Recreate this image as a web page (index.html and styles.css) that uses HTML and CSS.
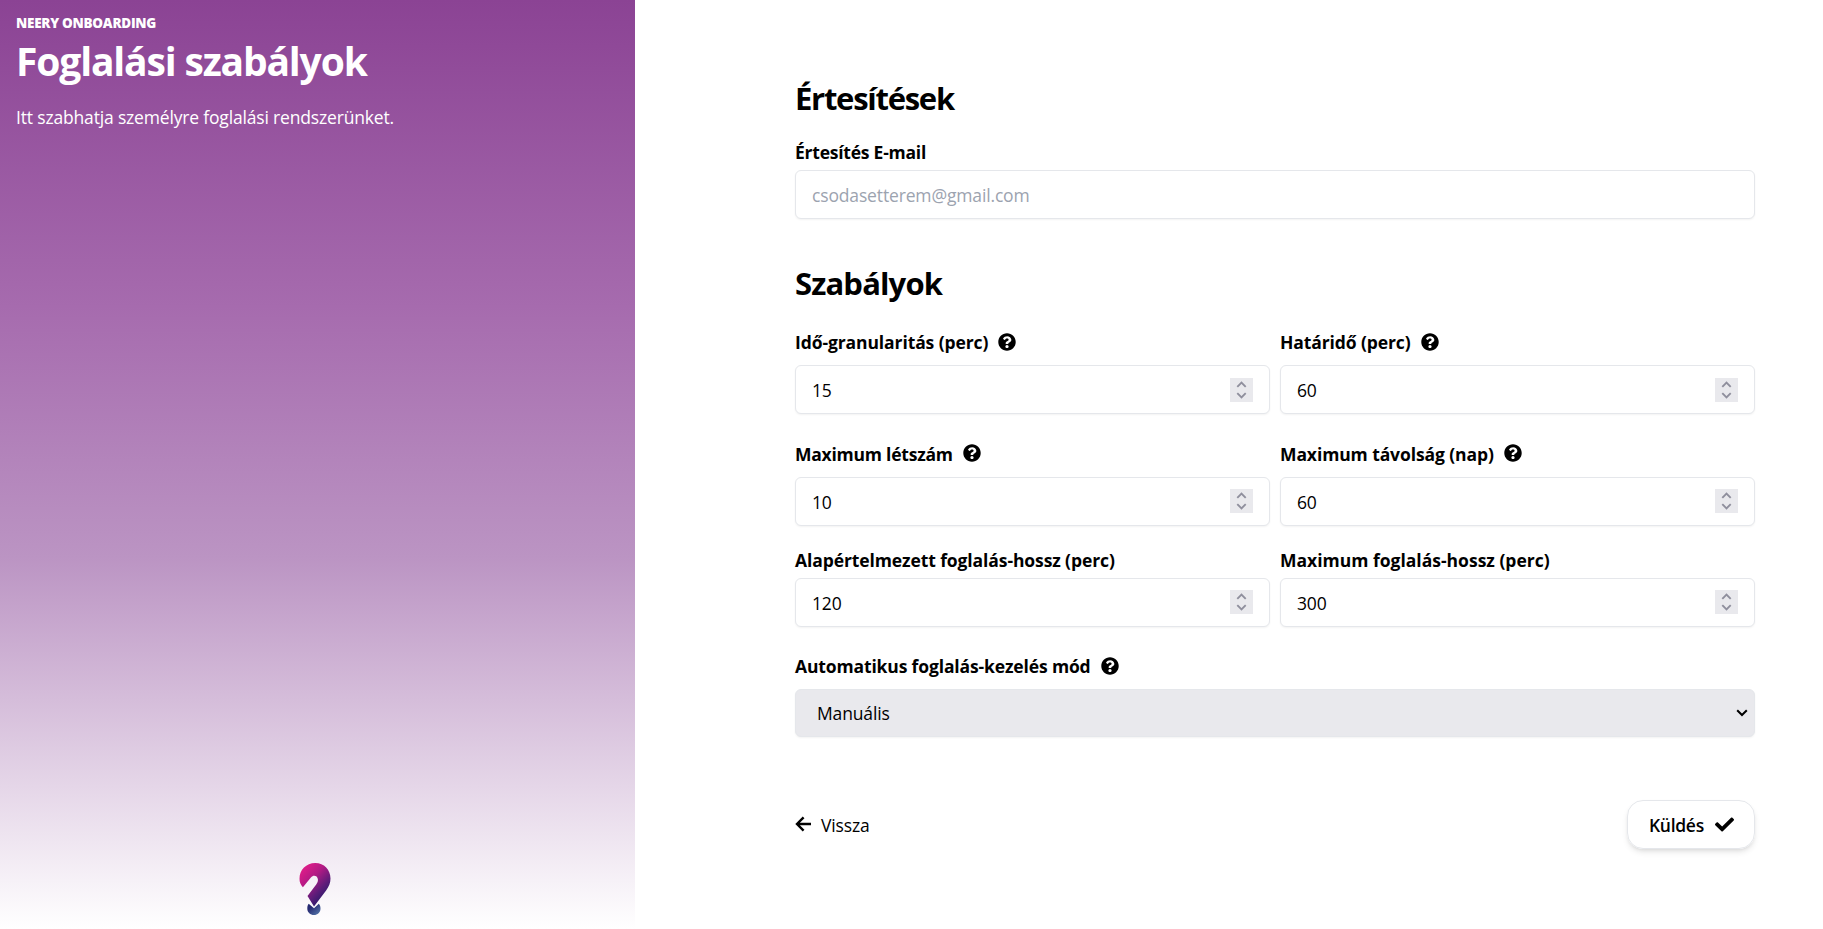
FILE: index.html
```html
<!DOCTYPE html>
<html lang="hu">
<head>
<meta charset="utf-8">
<title>Foglalási szabályok</title>
<link rel="stylesheet" href="styles.css">
</head>
<body>
<svg class="defs" width="0" height="0" aria-hidden="true">
  <symbol id="help" viewBox="0 0 512 512"><path d="M504 256c0 136.997-111.043 248-248 248S8 392.997 8 256C8 119.083 119.043 8 256 8s248 111.083 248 248zM262.655 90c-54.497 0-89.255 22.957-116.549 63.758-3.536 5.286-2.353 12.415 2.715 16.258l34.699 26.31c5.205 3.947 12.621 3.008 16.665-2.122 17.864-22.658 30.113-35.797 57.303-35.797 20.429 0 45.698 13.148 45.698 32.958 0 14.976-12.363 22.667-32.534 33.976C247.128 238.528 216 254.941 216 296v4c0 6.627 5.373 12 12 12h56c6.627 0 12-5.373 12-12v-1.333c0-28.462 83.186-29.647 83.186-106.667 0-58.002-60.165-102-116.531-102zM256 338c-25.365 0-46 20.635-46 46 0 25.364 20.635 46 46 46s46-20.636 46-46c0-25.365-20.635-46-46-46z"/></symbol>
  <symbol id="spin" viewBox="0 0 23 24"><path d="M7.300 8.900l4.200-4.200 4.200 4.200M7.300 15.200l4.200 4.200 4.200-4.200" fill="none" stroke="#8f8f9d" stroke-width="1.900"/></symbol>
</svg>
<div class="page">
  <aside class="side">
    <header>
      <p class="eyebrow">NEERY ONBOARDING</p>
      <h1 class="title">Foglalási szabályok</h1>
      <p class="lead">Itt szabhatja személyre foglalási rendszerünket.</p>
    </header>
    <svg class="logo" viewBox="0 0 32 52" width="32" height="52">
      <defs>
        <linearGradient id="lg1" gradientUnits="userSpaceOnUse" x1="3" y1="8" x2="28" y2="32"><stop offset="0" stop-color="#da1c88"/><stop offset=".35" stop-color="#b21a84"/><stop offset=".75" stop-color="#5c1c79"/><stop offset="1" stop-color="#2f1b6c"/></linearGradient>
        <linearGradient id="lg2" x1="0" y1="0" x2="1" y2="1"><stop offset=".3" stop-color="#262a72"/><stop offset="1" stop-color="#5a7fb0"/></linearGradient>
      </defs>
      <path fill="url(#lg1)" d="M3.900 24.300C1.500 21.800.5 19.200.5 15.800.5 6.800 7.200 0 16.200 0s15.300 6.800 15.300 15.500c0 4.500-1.600 8-4.400 12L15 43.500 8.500 33l8.700-11.600c1.700-2.500 2.200-4.200 1.400-6.200-1.200-2.900-4.500-3.100-6.700-.8z"/>
      <path fill="url(#lg2)" d="M9.700 40.700l5.300 4.600 4.800-4.600c1.100 1.200 1.700 2.800 1.700 4.700 0 3.900-2.900 6.600-6.500 6.600s-6.700-2.700-6.700-6.600c0-1.900.4-3.500 1.400-4.700z"/>
    </svg>
  </aside>
  <main class="form">
    <h2 class="heading h-first">Értesítések</h2>
    <div class="field tight">
      <label class="label snug">Értesítés E-mail</label>
      <div class="input placeholder">csodasetterem@gmail.com</div>
    </div>
    <h2 class="heading h-second">Szabályok</h2>
    <div class="row">
      <div class="field"><label class="label"><span>Idő-granularitás (perc)</span><svg class="help"><use href="#help"/></svg></label>
        <div class="input"><span>15</span><svg class="spin"><use href="#spin"/></svg></div></div>
      <div class="field"><label class="label"><span>Határidő (perc)</span><svg class="help"><use href="#help"/></svg></label>
        <div class="input"><span>60</span><svg class="spin"><use href="#spin"/></svg></div></div>
    </div>
    <div class="row row-2">
      <div class="field"><label class="label snug raised"><span>Maximum létszám</span><svg class="help"><use href="#help"/></svg></label>
        <div class="input raised"><span>10</span><svg class="spin"><use href="#spin"/></svg></div></div>
      <div class="field"><label class="label raised"><span>Maximum távolság (nap)</span><svg class="help"><use href="#help"/></svg></label>
        <div class="input raised"><span>60</span><svg class="spin"><use href="#spin"/></svg></div></div>
    </div>
    <div class="row row-3">
      <div class="field tight"><label class="label">Alapértelmezett foglalás-hossz (perc)</label>
        <div class="input raised"><span>120</span><svg class="spin"><use href="#spin"/></svg></div></div>
      <div class="field tight"><label class="label wide">Maximum foglalás-hossz (perc)</label>
        <div class="input raised"><span>300</span><svg class="spin"><use href="#spin"/></svg></div></div>
    </div>
    <div class="field mode"><label class="label"><span>Automatikus foglalás-kezelés mód</span><svg class="help"><use href="#help"/></svg></label>
      <div class="input select"><span>Manuális</span><svg class="caret" viewBox="0 0 12 8"><path d="M1.200 1.200L6 6l4.800-4.800" fill="none" stroke="#000" stroke-width="2"/></svg></div></div>
    <footer class="actions">
      <a class="back"><svg class="arrow" viewBox="0 0 16 16"><path d="M8.600 1.300L2 8l6.600 6.700M1.500 8H16" fill="none" stroke="#000" stroke-width="2.400"/></svg><span>Vissza</span></a>
      <a class="submit"><span>Küldés</span><svg class="check" viewBox="0 0 512 512"><path d="M173.898 439.404l-166.400-166.400c-9.997-9.997-9.997-26.206 0-36.204l36.203-36.204c9.997-9.998 26.207-9.998 36.204 0L192 312.690 432.095 72.596c9.997-9.997 26.207-9.997 36.204 0l36.203 36.204c9.997 9.997 9.997 26.206 0 36.204l-294.400 294.401c-9.998 9.997-26.207 9.997-36.204-.001z"/></svg></a>
    </footer>
  </main>
</div>
</body>
</html>
```
FILE: styles.css
```css
* { box-sizing: border-box; margin: 0; }
body { font-family: "Open Sans", "Noto Sans", sans-serif; font-size: 17.5px; line-height: 28px; letter-spacing: -.15px; color: #000; background: #fff; }
.defs { display: block; position: absolute; }
.page { display: flex; width: 1823px; height: 929px; overflow: hidden; }
.side { display: flex; flex-direction: column; justify-content: space-between; width: 635px; padding: 13px 16px 14px; color: #fff; background: linear-gradient(#8b4394 0%, #a66bae 33%, #bb94c3 60%, #fff 100%); }
.eyebrow { font-size: 13.5px; line-height: 20px; font-weight: 800; letter-spacing: -.27px; }
.title { margin-top: 4px; font-size: 39px; line-height: 48px; font-weight: 700; letter-spacing: -1.15px; }
.lead { margin-top: 18px; letter-spacing: -.17px; }
.logo { align-self: center; margin-right: 5px; }
.form { flex: 1; padding: 78px 68px 0 160px; }
.heading { font-size: 31px; line-height: 40px; font-weight: 700; }
.h-first { margin-bottom: 20px; letter-spacing: -1.27px; }
.h-second { margin: 44px 0 25px; letter-spacing: -.85px; }
.row { display: grid; grid-template-columns: 475px 475px; gap: 10px; }
.row-2 { margin-top: 26px; }
.row-3 { margin-top: 20px; }
.mode { margin-top: 25px; }
.mode .label { letter-spacing: -.14px; }
.field { display: flex; flex-direction: column; gap: 9px; }
.tight { gap: 4px; }
.label { display: flex; gap: 10px; height: 28px; font-weight: 700; letter-spacing: -.1px; }
.snug { letter-spacing: -.23px; }
.wide { letter-spacing: 0; }
.help { width: 18px; height: 18px; margin-top: 5px; }
.label.raised .help { margin-top: 4px; }
.input { display: flex; align-items: center; justify-content: space-between; height: 49px; padding: 0 16px; border: 1px solid #e5e7eb; border-radius: 6px; box-shadow: 0 1px 2px rgba(0,0,0,.05); background: #fff; }
.placeholder { color: #9ca3af; }
.spin { width: 23px; height: 24px; background: #e9e9ed; }
.input.raised .spin { margin-bottom: 1px; }
.select { height: 48px; padding: 0 6px 0 21px; background: #e9e9ed; }
.caret { width: 12px; height: 8px; }
.actions { display: flex; justify-content: space-between; align-items: center; margin-top: 63px; }
.back { display: flex; align-items: center; gap: 10px; }
.arrow { width: 16px; height: 16px; margin-bottom: 1px; }
.submit { display: flex; align-items: center; justify-content: space-between; width: 128px; height: 49px; padding: 0 20px 0 21px; font-weight: 600; letter-spacing: -.3px; border: 1px solid #e5e7eb; border-radius: 16px; box-shadow: 0 4px 6px -1px rgba(0,0,0,.1), 0 2px 4px -2px rgba(0,0,0,.1); }
.check { width: 19px; height: 19px; margin-bottom: 1px; }
```
